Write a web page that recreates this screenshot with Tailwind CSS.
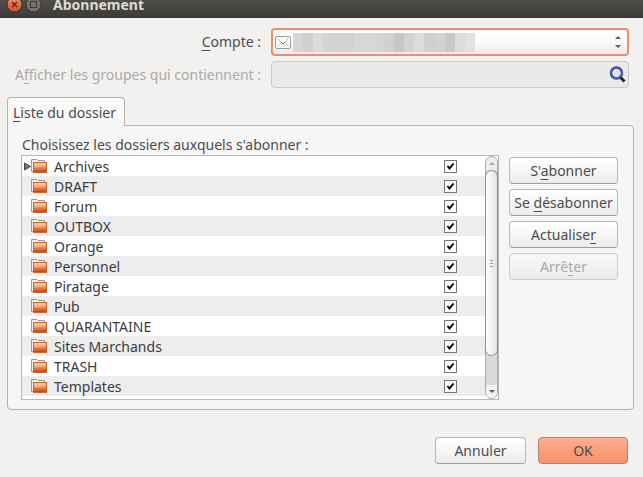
<!DOCTYPE html>
<html lang="fr">
<head>
  <meta charset="UTF-8">
  <meta name="viewport" content="width=device-width, initial-scale=1.0">
  <title>Abonnement</title>
  <script src="https://cdn.jsdelivr.net/npm/@tailwindcss/browser@4"></script>
</head>
<body class="min-h-screen overflow-hidden bg-[#f2f1f0] font-['Noto_Sans','Open_Sans',sans-serif] text-sm text-[#4c4c4c] [font-variant-ligatures:none] [text-decoration-skip-ink:none]">
  <!-- Title bar -->
  <header class="-mt-[9px] flex h-[27px] items-center bg-linear-to-b from-[#5a5850] to-[#3c3b37] pl-[6px]">
    <button type="button" aria-label="Fermer" class="mr-[2px]">
      <svg class="block size-[17px]" viewBox="0 0 17 17">
        <defs><linearGradient id="closeFill" x2="0" y2="1"><stop stop-color="#f9916c"/><stop offset="1" stop-color="#e0481c"/></linearGradient></defs>
        <circle cx="8.5" cy="8.5" r="7.5" fill="url(#closeFill)" stroke="#33322e"/>
        <path d="M6 6l5 5M11 6l-5 5" stroke="#3c2a20" stroke-width="1.3"/>
      </svg>
    </button>
    <button type="button" aria-label="Agrandir">
      <svg class="block size-[17px]" viewBox="0 0 17 17">
        <circle cx="8.5" cy="8.5" r="7.5" fill="#75736b" stroke="#33322e"/>
        <rect x="5.5" y="5.5" width="6" height="6" fill="none" stroke="#3a3934"/>
      </svg>
    </button>
    <h1 class="ml-[11px] font-bold text-[#dfdbd2]">Abonnement</h1>
  </header>

  <main class="px-[7px] pt-[10px]">
    <!-- Account and filter -->
    <form class="grid grid-cols-[254px_1fr] items-center gap-x-[10px] gap-y-[5px] pr-[7px]">
      <label for="account" class="text-right"><span class="underline underline-offset-3">C</span>ompte :</label>
      <div class="relative">
        <select id="account" class="block h-[28px] w-full appearance-none rounded border-2 border-[#ea8e6e] bg-linear-to-b from-white via-[#fafafa] to-[#ececeb] pl-6 outline-none"><option></option></select>
        <div class="pointer-events-none absolute inset-0 flex items-center px-1">
          <svg class="h-[13px] w-[16px]" viewBox="0 0 16 13">
            <rect x=".5" y=".5" width="15" height="12" rx="1.5" fill="#f7f7f7" stroke="#999"/>
            <path d="M2.500 10.500l4-4M13.500 10.500l-4-4" stroke="#ccc"/>
            <path d="M3 3l5 5 5-5" fill="none" stroke="#bbb"/>
            <path d="M6 6l2 2 2-2" fill="none" stroke="#777"/>
          </svg>
          <div id="mask" class="mt-[5px] mb-1 ml-[2px] flex h-[19px] w-[182px]"></div>
          <svg class="mr-1 ml-auto h-[14px] w-[6px]" viewBox="0 0 6 14" fill="#5c5c5c"><path d="M0 4l3-3 3 3zM0 10l3 3 3-3z"/></svg>
        </div>
      </div>
      <label for="filter" class="text-right text-[#aca9a5]">A<span class="underline underline-offset-3">f</span>ficher les groupes qui contiennent :</label>
      <div class="relative">
        <input id="filter" type="text" disabled class="block h-[27px] w-full rounded border border-[#cbc9c7] bg-[#ebeae9] pr-7 pl-2">
        <svg class="absolute top-[5px] right-[3px] size-[17px]" viewBox="0 0 17 17">
          <path d="M11.500 11.500l4 4" stroke="#222" stroke-width="3"/>
          <circle cx="7.500" cy="7" r="5.500" fill="#dfe4ea" stroke="#28398a" stroke-width="2.500"/>
          <circle cx="7.500" cy="7" r="5.500" fill="none" stroke="#5f7ccd" stroke-width="1"/>
        </svg>
      </div>
    </form>

    <!-- Tab -->
    <div role="tablist" class="relative mt-[9px] -mb-px flex">
      <button role="tab" type="button" aria-selected="true" class="h-[29px] rounded-t border border-b-0 border-[#b5b2ae] bg-linear-to-b from-[#fcfcfc] to-[#f6f6f6] pt-px pr-2 pl-[5px]"><span class="underline underline-offset-3">L</span>iste du dossier</button>
    </div>

    <section class="mr-[2px] rounded-b rounded-tr border border-[#b5b2ae] bg-[#f6f6f6] pt-[9px] pr-[15px] pb-[9px] pl-[13px]">
      <h2 class="px-px leading-5">Choisissez les dossiers auxquels s'abonner :</h2>
      <div class="flex gap-[10px]">
        <!-- Folder list -->
        <div class="flex h-[245px] flex-1 border border-[#b9b6b3] bg-white">
          <div class="flex-1 overflow-hidden">
            <table class="w-full border-collapse text-[#3c3c3c]">
              <tbody id="folders"></tbody>
            </table>
          </div>
          <!-- Scroll bar -->
          <div class="flex w-[13px] flex-col rounded-full border border-[#aaa7a4] bg-[#dcdad8]">
            <div class="flex h-[13px] items-center justify-center rounded-t-full bg-[#efeeed]">
              <svg class="h-[3px] w-[6px]" viewBox="0 0 6 3" fill="#aaa"><path d="M0 3l3-3 3 3z"/></svg>
            </div>
            <div class="-mx-px flex h-[186px] flex-col items-center justify-center gap-[2px] rounded-full border border-[#8f8d8b] bg-linear-to-r from-white to-[#e3e2e1]">
              <span class="h-px w-[3px] bg-[#999]"></span>
              <span class="h-px w-[3px] bg-[#999]"></span>
              <span class="h-px w-[3px] bg-[#999]"></span>
            </div>
            <div class="mt-auto flex h-[13px] items-center justify-center rounded-b-full bg-[#f4f3f2]">
              <svg class="h-[3px] w-[6px]" viewBox="0 0 6 3" fill="#5c5c5c"><path d="M0 0l3 3 3-3z"/></svg>
            </div>
          </div>
        </div>
        <!-- Folder actions -->
        <div class="flex w-[109px] flex-col gap-[5px] pt-[2px]">
          <button type="button" class="h-[27px] rounded border border-[#b9b7b4] border-b-[#a09e9b] bg-linear-to-b from-white to-[#ececeb] whitespace-nowrap">S'<span class="underline underline-offset-3">a</span>bonner</button>
          <button type="button" class="h-[27px] rounded border border-[#b9b7b4] border-b-[#a09e9b] bg-linear-to-b from-white to-[#ececeb] whitespace-nowrap">Se <span class="underline underline-offset-3">d</span>ésabonner</button>
          <button type="button" class="h-[27px] rounded border border-[#b9b7b4] border-b-[#a09e9b] bg-linear-to-b from-white to-[#ececeb] whitespace-nowrap">Actualise<span class="underline underline-offset-3">r</span></button>
          <button type="button" disabled class="h-[27px] rounded border border-[#cccac8] bg-linear-to-b from-[#f8f8f8] to-[#ececeb] whitespace-nowrap text-[#aca9a5]">Arrê<span class="underline underline-offset-3">t</span>er</button>
        </div>
      </div>
    </section>

    <!-- Dialog buttons -->
    <footer class="mt-[27px] flex justify-end gap-3 pr-2">
      <button type="button" class="h-[27px] w-[91px] rounded border border-[#b9b7b4] border-b-[#a09e9b] bg-linear-to-b from-white to-[#ececeb]">Annuler</button>
      <button type="button" class="h-[27px] w-[90px] rounded border border-[#b8816b] bg-linear-to-b from-[#ffae8f] to-[#f4906a]">OK</button>
    </footer>
  </main>

  <svg class="absolute size-0">
    <defs>
      <linearGradient id="folderFill" x2="0" y2="1"><stop stop-color="#f3c49a"/><stop offset=".5" stop-color="#e88a4a"/><stop offset="1" stop-color="#c9380f"/></linearGradient>
    </defs>
  </svg>

  <script>
    const folders = ['Archives', 'DRAFT', 'Forum', 'OUTBOX', 'Orange', 'Personnel', 'Piratage', 'Pub', 'QUARANTAINE', 'Sites Marchands', 'TRASH', 'Templates'];

    document.getElementById('folders').innerHTML = folders.map((name, i) => `
      <tr class="h-5 even:bg-[#ededed]">
        <td class="p-0">
          <label for="folder${i}" class="flex h-5 items-center pt-px pl-[2px]">
            <svg class="h-[9px] w-[7px]" viewBox="0 0 7 9">${i === 0 ? '<path d="M.5 1l6 3.500-6 3.500z" fill="#777" stroke="#444"/>' : ''}</svg>
            <svg class="mr-[7px] h-[15px] w-[16px]" viewBox="0 0 16 15">
              <path d="M.5 12.500V.5h5.500l1 1h6.500v11z" fill="#f6f6f6" stroke="#999"/>
              <rect x="2.500" y="3.500" width="13" height="10" fill="url(#folderFill)" stroke="#d0602c"/>
              <path d="M3 4h12v3L3 9z" fill="#fff" fill-opacity=".25"/>
            </svg>
            ${name}
          </label>
        </td>
        <td class="w-[41px] p-0">
          <span class="relative block size-[13px]">
            <input id="folder${i}" type="checkbox" checked class="block size-[13px] appearance-none border border-[#777] bg-white">
            <svg class="pointer-events-none absolute inset-0 size-[13px]" viewBox="0 0 13 13"><path d="M3.500 6l2 2.500 4-5" fill="none" stroke="#000" stroke-width="2"/></svg>
          </span>
        </td>
      </tr>`).join('');

    // Greyed-out account name
    const shades = ['#d6d6d6', '#d3cfcc', '#dadbdc', '#d3d4d5', '#d3d2d0', '#d3d3d3', '#d6d7d8', '#d6d7d8', '#d4d5d6', '#d1d1d1', '#c8c7c6', '#d3d3d3', '#dcdcdc', '#d0cfcd', '#d2d2d1', '#c9c8c7', '#dcdcdc', '#e2e2e2'];
    document.getElementById('mask').innerHTML = shades.map(c => `<span class="flex-1" style="background:${c}"></span>`).join('');
  </script>
</body>
</html>
